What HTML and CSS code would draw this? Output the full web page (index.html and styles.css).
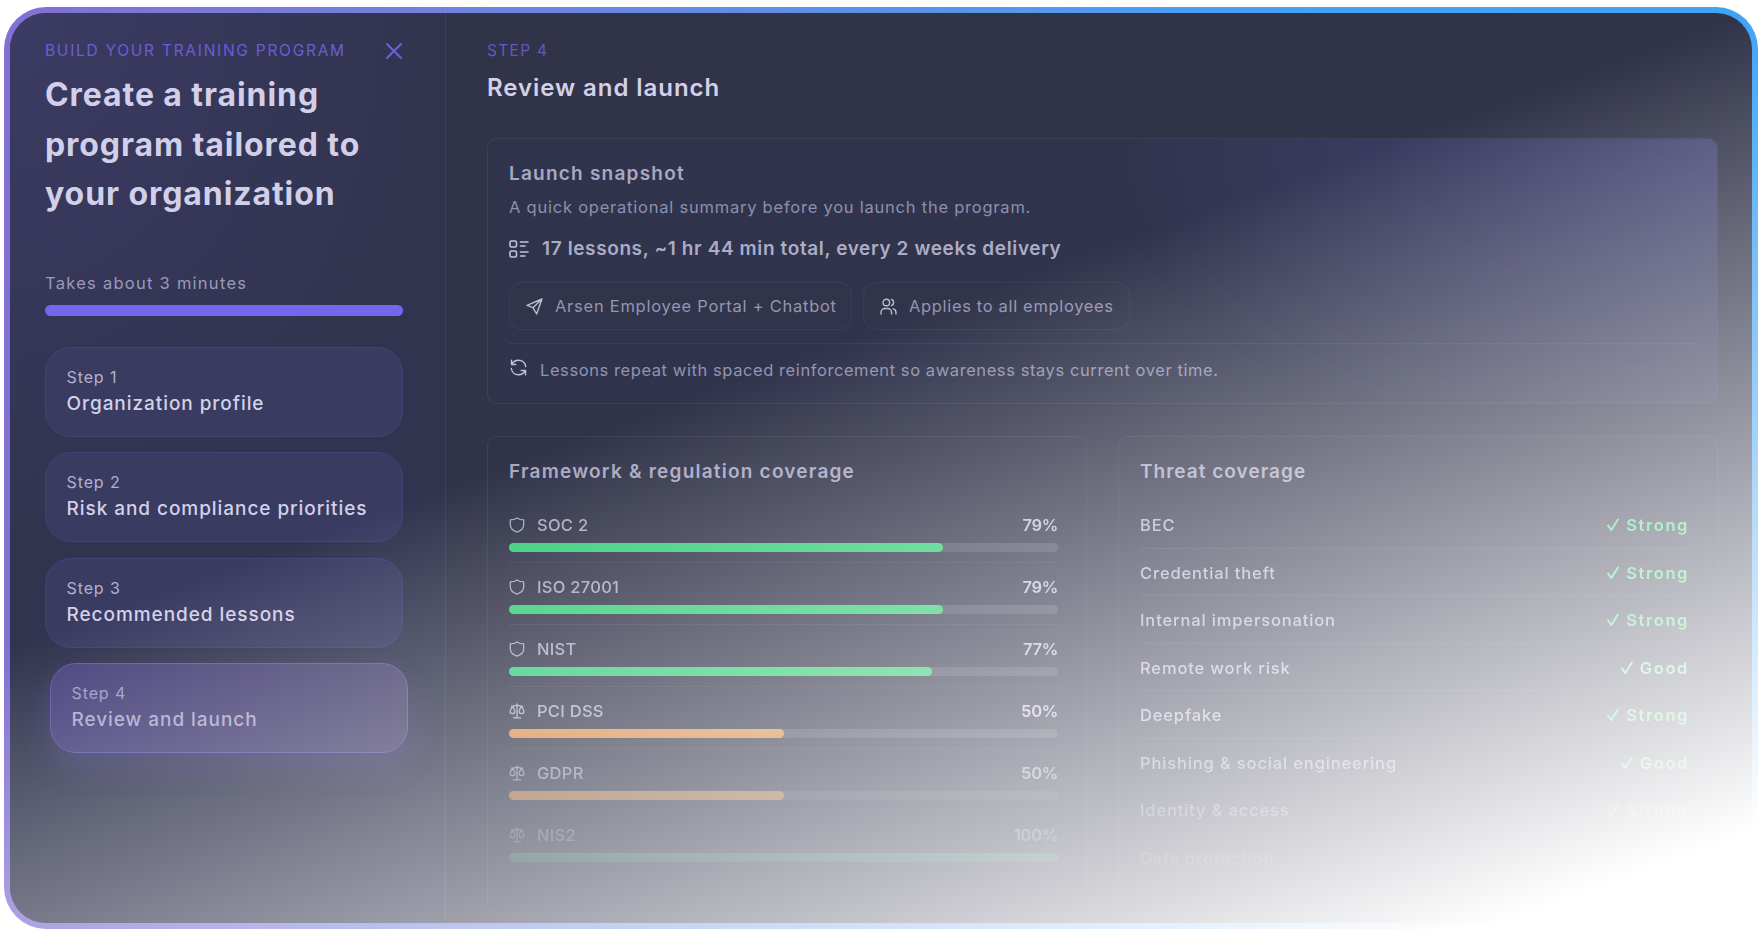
FILE: index.html
```
<!DOCTYPE html>
<html lang="en">
<head>
    <meta charset="UTF-8">
    <meta name="viewport" content="width=device-width, initial-scale=1.0">
    <title>Build your training program</title>
    <link rel="stylesheet" href="styles.css">
</head>
<body>
    <!-- Shared icons -->
    <svg class="icon-defs" xmlns="http://www.w3.org/2000/svg">
        <symbol id="icon-shield" viewBox="0 0 16 16"><path d="M8 .9C6.100 2.300 4 2.900 1.300 2.900v4.900c0 3.400 2.700 6 6.700 7.400 4-1.400 6.700-4 6.700-7.400V2.900C12 2.900 9.900 2.300 8 .9z"/></symbol>
        <symbol id="icon-scale" viewBox="0 0 16 16"><path d="M8 .8v14M4.300 14.800h7.400M2.400 3.200C4.600 3.200 6.600 2.400 8 2.200c1.400.2 3.400 1 5.600 1M3.600 3.300C2 5.600 1 7.600 1 8.800c0 2.400 4.900 2.400 4.900 0 0-1.200-.8-3.200-2.300-5.500zM12.400 3.300c-1.500 2.300-2.300 4.300-2.300 5.500 0 2.400 4.900 2.400 4.900 0 0-1.200-1-3.200-2.600-5.500z"/></symbol>
        <symbol id="icon-check" viewBox="0 0 13 15"><path d="M1.200 8.200 4.800 13 11.800 1.600"/></symbol>
    </svg>

    <div class="frame">
        <div class="modal">
            <aside class="sidebar">
                <div class="sidebar-top">
                    <span class="kicker">BUILD YOUR TRAINING PROGRAM</span>
                    <svg class="close" viewBox="0 0 16 16"><path d="M1 1l14 14M15 1L1 15"/></svg>
                </div>
                <h1>Create a training<br>program tailored to<br>your organization</h1>
                <p class="duration">Takes about 3 minutes</p>
                <div class="progress"></div>
                <div class="steps">
                    <div class="step">
                        <div class="step-label">Step 1</div>
                        <div class="step-title">Organization profile</div>
                    </div>
                    <div class="step">
                        <div class="step-label">Step 2</div>
                        <div class="step-title">Risk and compliance priorities</div>
                    </div>
                    <div class="step">
                        <div class="step-label">Step 3</div>
                        <div class="step-title">Recommended lessons</div>
                    </div>
                    <div class="step active">
                        <div class="step-label">Step 4</div>
                        <div class="step-title">Review and launch</div>
                    </div>
                </div>
            </aside>

            <main class="content">
                <div class="kicker step-kicker">STEP 4</div>
                <h2>Review and launch</h2>

                <section class="card snapshot">
                    <h3>Launch snapshot</h3>
                    <p class="desc">A quick operational summary before you launch the program.</p>
                    <div class="lessons">
                        <svg class="icon" viewBox="0 0 20 18"><rect x="1" y="1" width="6.500" height="6" rx="1.500"/><rect x="1" y="11" width="6.500" height="6" rx="1.500"/><path d="M11.500 2H19M11.500 6h4.500M11.500 12H19M11.500 16h4.500"/></svg>
                        <span>17 lessons, ~1 hr 44 min total, every 2 weeks delivery</span>
                    </div>
                    <div class="chips">
                        <div class="chip">
                            <svg class="icon" viewBox="0 0 17 17"><path d="M16 1 1 7.400l5.900 2.300L10.600 16zM16 1 6.900 9.700"/></svg>
                            <span>Arsen Employee Portal + Chatbot</span>
                        </div>
                        <div class="chip users">
                            <svg class="icon" viewBox="0 0 17 17"><circle cx="6.300" cy="4.500" r="3.300"/><path d="M1 16v-1.500c0-2.200 1.800-4 4-4h2.600c2.200 0 4 1.800 4 4V16M11.400 1.400c2.900.8 2.900 5.400 0 6.200M13.200 10.900c1.800.5 2.800 1.900 2.800 3.600V16"/></svg>
                            <span>Applies to all employees</span>
                        </div>
                    </div>
                    <div class="repeat">
                        <svg class="icon" viewBox="0 0 17 17"><path d="M1.500 1.200v4.300h4.300M1.700 5.400C3.300 2.600 5.600 1.300 8.500 1.300c3.900 0 6.700 2.700 7.200 6.200M15.500 15.800v-4.300h-4.300M15.300 11.600c-1.600 2.800-3.900 4.100-6.800 4.100-3.900 0-6.700-2.700-7.200-6.200"/></svg>
                        <span>Lessons repeat with spaced reinforcement so awareness stays current over time.</span>
                    </div>
                </section>

                <div class="columns">
                    <section class="card coverage">
                        <h3>Framework &amp; regulation coverage</h3>
                        <div class="list">
                            <div class="framework">
                                <div class="row"><svg class="icon"><use href="#icon-shield"/></svg><span class="name">SOC 2</span><span class="percent">79%</span></div>
                                <div class="bar"><div class="fill" style="width: 79%"></div></div>
                            </div>
                            <div class="framework">
                                <div class="row"><svg class="icon"><use href="#icon-shield"/></svg><span class="name">ISO 27001</span><span class="percent">79%</span></div>
                                <div class="bar"><div class="fill" style="width: 79%"></div></div>
                            </div>
                            <div class="framework">
                                <div class="row"><svg class="icon"><use href="#icon-shield"/></svg><span class="name">NIST</span><span class="percent">77%</span></div>
                                <div class="bar"><div class="fill" style="width: 77%"></div></div>
                            </div>
                            <div class="framework">
                                <div class="row"><svg class="icon"><use href="#icon-scale"/></svg><span class="name">PCI DSS</span><span class="percent">50%</span></div>
                                <div class="bar"><div class="fill medium" style="width: 50%"></div></div>
                            </div>
                            <div class="framework">
                                <div class="row"><svg class="icon"><use href="#icon-scale"/></svg><span class="name">GDPR</span><span class="percent">50%</span></div>
                                <div class="bar"><div class="fill medium" style="width: 50%"></div></div>
                            </div>
                            <div class="framework">
                                <div class="row"><svg class="icon"><use href="#icon-scale"/></svg><span class="name">NIS2</span><span class="percent">100%</span></div>
                                <div class="bar"><div class="fill" style="width: 100%"></div></div>
                            </div>
                        </div>
                    </section>

                    <section class="card threats">
                        <h3>Threat coverage</h3>
                        <div class="list">
                            <div class="threat"><span>BEC</span><span class="rating"><svg><use href="#icon-check"/></svg>Strong</span></div>
                            <div class="threat"><span>Credential theft</span><span class="rating"><svg><use href="#icon-check"/></svg>Strong</span></div>
                            <div class="threat"><span>Internal impersonation</span><span class="rating"><svg><use href="#icon-check"/></svg>Strong</span></div>
                            <div class="threat"><span>Remote work risk</span><span class="rating good"><svg><use href="#icon-check"/></svg>Good</span></div>
                            <div class="threat"><span>Deepfake</span><span class="rating"><svg><use href="#icon-check"/></svg>Strong</span></div>
                            <div class="threat"><span>Phishing &amp; social engineering</span><span class="rating good"><svg><use href="#icon-check"/></svg>Good</span></div>
                            <div class="threat"><span>Identity &amp; access</span><span class="rating"><svg><use href="#icon-check"/></svg>Strong</span></div>
                            <div class="threat"><span>Data protection</span></div>
                        </div>
                    </section>
                </div>
            </main>
        </div>
    </div>
</body>
</html>
```
FILE: styles.css
```
* {
    box-sizing: border-box;
}
body {
    margin: 0;
    padding: 7px 4px 5px;
    width: 1762px;
    height: 934px;
    overflow: hidden;
    background-color: #fff;
    color: #b0afc9;
    font-family: Inter, "Open Sans", sans-serif;
    font-size: 16.5px;
    line-height: 24px;
}
h1, h2, h3, p {
    margin: 0;
}
svg {
    fill: none;
    stroke: currentColor;
    stroke-width: 1.4;
    stroke-linecap: round;
    stroke-linejoin: round;
    flex-shrink: 0;
}
.icon-defs {
    position: absolute;
    width: 0;
    height: 0;
}
.frame {
    position: relative;
    width: 1754px;
    height: 922px;
    padding: 6px;
    border-radius: 42px;
    background: linear-gradient(90deg, #8270d4 0%, #6f84de 28%, #45a2f3 75%, #3fa3f5 100%);
}
/* White fade towards the bottom right corner */
.frame::after {
    content: "";
    position: absolute;
    inset: -1px;
    background: linear-gradient(160deg, rgba(255, 255, 255, 0) 41%, #fff 93.5%);
    pointer-events: none;
}
.modal {
    display: flex;
    height: 910px;
    border-radius: 36px;
    background-color: #313349;
    overflow: hidden;
}

/* Sidebar */
.sidebar {
    width: 436px;
    flex-shrink: 0;
    padding: 26px 42px 0 35px;
    border-right: 1px solid #3f4159;
    background: radial-gradient(ellipse 100% 60% at 0 0, #3c3b64 0%, #363759 50%, #31344e 100%);
}
.sidebar-top {
    display: flex;
    justify-content: space-between;
    align-items: center;
}
.kicker {
    color: #6c5dd3;
    font-size: 15.5px;
    letter-spacing: 1.73px;
}
.close {
    width: 16px;
    height: 16px;
    margin-right: 1px;
    color: #6f60da;
    stroke-width: 2;
}
h1 {
    margin-top: 7px;
    color: #d2cfe8;
    font-size: 32px;
    font-weight: 700;
    line-height: 49.5px;
    letter-spacing: 0.92px;
    white-space: nowrap;
}
.duration {
    margin-top: 52px;
    color: #9c9ab8;
    letter-spacing: 1.26px;
}
.progress {
    height: 11px;
    margin-top: 10px;
    border-radius: 6px;
    background-color: #7467ee;
}
.steps {
    display: flex;
    flex-direction: column;
    gap: 15.5px;
    margin-top: 31px;
}
.step {
    height: 90px;
    padding: 17px 20.5px;
    border: 1px solid #42427a;
    border-radius: 26px;
    background-color: #3a3b61;
    white-space: nowrap;
}
.step-label {
    color: #b3b1cd;
    font-size: 16px;
    letter-spacing: 0.9px;
}
.step-title {
    color: #d3d1e9;
    font-size: 19px;
    font-weight: 500;
    line-height: 30px;
    letter-spacing: 0.94px;
}
.step.active {
    margin-left: 5px;
    margin-right: -5px;
    border-color: #625aa8;
    background: linear-gradient(100deg, #49437f, #4b466f);
    box-shadow: 0 14px 30px rgba(108, 96, 220, 0.22);
}
.step.active .step-label {
    color: #9f9bc4;
}
.step.active .step-title {
    color: #aeaace;
}

/* Main column */
.content {
    flex: 1;
    padding: 26px 34px 0 41px;
}
.step-kicker {
    color: #6456c4;
    letter-spacing: 1.3px;
}
h2 {
    margin: 10px 0 35px;
    color: #d3d1ea;
    font-size: 24px;
    font-weight: 600;
    line-height: 30px;
    letter-spacing: 0.94px;
}
h3 {
    color: #a9a8c3;
    font-size: 19px;
    font-weight: 600;
    line-height: 28px;
    letter-spacing: 1.22px;
}
.card {
    border: 1px solid rgba(255, 255, 255, 0.06);
    border-radius: 10px;
    padding: 21px;
}
.snapshot {
    height: 266px;
    background: radial-gradient(ellipse 50% 130% at 100% 0, rgba(112, 112, 215, 0.3), rgba(48, 60, 140, 0.06) 100%);
    background-clip: padding-box;
}
.desc {
    margin-top: 7px;
    color: #908fac;
    letter-spacing: 0.77px;
}
.lessons {
    display: flex;
    align-items: center;
    gap: 13px;
    margin-top: 16px;
    color: #adacc6;
    font-size: 19px;
    font-weight: 600;
    line-height: 28px;
    letter-spacing: 0.62px;
}
.lessons .icon {
    width: 20px;
    height: 18px;
    color: #c5c3dc;
    stroke-width: 1.6;
}
.chips {
    display: flex;
    gap: 11px;
    margin-top: 19px;
}
.chip {
    display: flex;
    align-items: center;
    gap: 12px;
    width: 343px;
    height: 48px;
    padding-left: 16px;
    border: 1px solid rgba(255, 255, 255, 0.05);
    border-radius: 14px;
    background-color: rgba(49, 52, 72, 0.55);
    color: #9695b2;
    letter-spacing: 0.74px;
}
.chip.users {
    width: 267px;
    letter-spacing: 0.66px;
}
.chip .icon {
    width: 17px;
    height: 17px;
    color: #bcbad4;
}
.repeat {
    display: flex;
    gap: 13px;
    margin-top: 13px;
    padding-top: 14px;
    border-top: 1px solid rgba(255, 255, 255, 0.06);
    color: #9493b0;
    letter-spacing: 0.58px;
}
.repeat .icon {
    width: 17px;
    height: 17px;
    margin: 1px 0 0 1px;
    color: #c5c3dc;
}
.columns {
    display: grid;
    grid-template-columns: 1fr 1fr;
    gap: 31px;
    height: 478px;
    margin-top: 32px;
}
.columns .card {
    padding: 21px 28px 0 21px;
}
/* Last rows fade out under the fold */
.list {
    margin-top: 15px;
    mask-image: linear-gradient(#000 225px, transparent 395px);
}
.framework {
    padding: 12px 0 10px;
    border-bottom: 1px solid rgba(255, 255, 255, 0.06);
    color: #aaa9c3;
}
.framework:last-child,
.threat:last-child {
    border-bottom-color: transparent;
}
.row {
    display: flex;
    align-items: center;
    gap: 12px;
    font-weight: 500;
    letter-spacing: 0.28px;
}
.row .icon {
    width: 16px;
    height: 16px;
    stroke-width: 1.3;
}
.percent {
    margin-left: auto;
    color: #c0bfd6;
    font-weight: 600;
    letter-spacing: -0.3px;
}
.bar {
    height: 9px;
    margin-top: 6px;
    border-radius: 5px;
    background-color: rgba(255, 255, 255, 0.12);
}
.fill {
    height: 100%;
    border-radius: 5px;
    background-color: #36ce79;
}
.fill.medium {
    background-color: #e0914a;
}
.threats h3 {
    letter-spacing: 1.02px;
}
.threat {
    display: flex;
    justify-content: space-between;
    align-items: flex-start;
    height: 47.5px;
    padding-top: 12px;
    border-bottom: 1px solid rgba(255, 255, 255, 0.07);
    color: #b3b2ca;
    font-weight: 500;
    letter-spacing: 0.86px;
}
.rating {
    display: flex;
    align-items: center;
    gap: 7px;
    color: #4ade80;
    font-weight: 600;
    letter-spacing: 1.6px;
}
.rating svg {
    width: 12px;
    height: 14px;
    stroke-width: 2.1;
}
.rating.good {
    color: #6be297;
}
```
